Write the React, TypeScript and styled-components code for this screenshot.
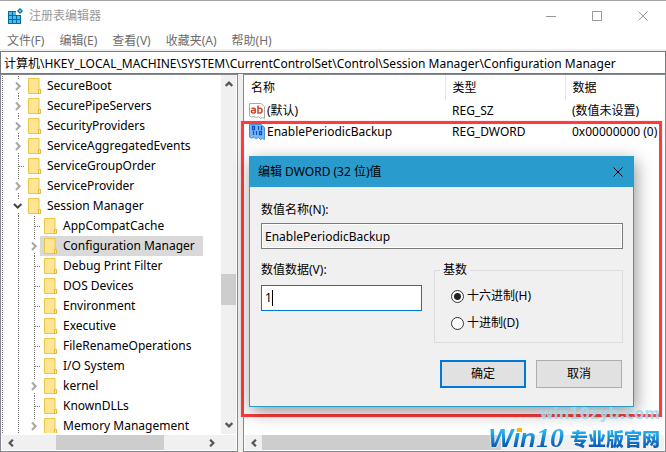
import React, { useState } from "react";
import styled, { createGlobalStyle, css } from "styled-components";

const GlobalStyle = createGlobalStyle`
  *, *::before, *::after { box-sizing: border-box; }
  body { margin: 0; background: #fff; }
  button, input, label, legend, th, td { font: inherit; color: inherit; }
`;

const Window = styled.div`
  position: relative;
  display: flex;
  flex-direction: column;
  min-height: 100vh;
  overflow: hidden;
  border-top: 1px solid #a3a3a3;
  background: #fff;
  color: #000;
  font-family: "Noto Sans", "Noto Sans CJK SC", sans-serif;
  font-size: 12px;
  line-height: 20px;
`;

const TitleBar = styled.header`
  display: flex;
  align-items: center;
  height: 30px;
  padding-left: 7px;
  color: #999;
`;

const WindowTitle = styled.h1`
  flex: 1;
  margin: 0 0 0 6px;
  font-size: 12px;
  font-weight: 400;
`;

const CaptionButton = styled.button`
  display: grid;
  place-items: center;
  width: 46px;
  height: 30px;
  padding: 0;
  border: 0;
  background: none;
  color: #999;
`;

const MenuBar = styled.nav`
  display: flex;
  gap: 15px;
  height: 18px;
  padding-left: 7px;
`;

const MenuButton = styled.button`
  padding: 0;
  border: 0;
  background: none;
  line-height: 20px;
  color: #6d6d6d !important;
`;

const AddressArea = styled.div`
  padding-top: 2px;
  background: #f0f0f0;
`;

const AddressInput = styled.input`
  display: block;
  width: 100%;
  height: 23px;
  padding: 0 3px;
  border: 1px solid #7a7a7a;
  background: #fff;
  outline: 0;
`;

const Panels = styled.main`
  display: flex;
  flex: 1;
  gap: 5px;
  background: #f0f0f0;
`;

const panel = css`
  display: flex;
  flex-direction: column;
  border: 1px solid #828790;
  background: #fff;
`;

const TreePanel = styled.section`
  ${panel}
  width: 238px;
`;

const ListPanel = styled.section`
  ${panel}
  flex: 1;
  min-width: 0;
`;

const TreeBody = styled.div`
  display: flex;
  flex: 1 1 0;
  min-height: 358px;
  padding-right: 1px;
  overflow: hidden;
`;

const TreeList = styled.ul`
  flex: 1 1 0;
  height: 358px;
  margin: 0;
  padding: 1px 0 0;
  overflow: hidden;
  list-style: none;
`;

const TreeRow = styled.li`
  display: flex;
  height: 20px;
  white-space: nowrap;
`;

const Twisty = styled.button`
  display: block;
  padding: 0;
  border: 0;
  background: none;
`;

const Glyph = styled.svg`
  display: block;
  flex: none;
`;

const KeyLabel = styled.span<{ $selected?: boolean }>`
  display: flex;
  align-items: center;
  gap: 5px;
  padding: 0 8px 0 4px;
  background: ${(p) => (p.$selected ? "#d9d9d9" : "transparent")};
`;

const VScroll = styled.div`
  display: flex;
  flex-direction: column;
  align-items: center;
  width: 15px;
  padding: 5px 0;
  background: #f0f0f0;
`;

const VThumb = styled.div`
  width: 15px;
  height: 31px;
  margin: 186px 0 auto;
  background: #cdcdcd;
`;

const HScroll = styled.div<{ $corner?: number }>`
  display: flex;
  align-items: center;
  height: 17px;
  padding-right: ${(p) => p.$corner ?? 0}px;
  border: 1px solid #fff;
  background: #f0f0f0;
`;

const ScrollButton = styled.button`
  display: grid;
  place-items: center;
  width: 17px;
  height: 15px;
  padding: 0;
  border: 0;
  background: none;
`;

const Track = styled.div<{ $start: number; $end: number }>`
  flex: 1;
  height: 15px;
  padding: 0 ${(p) => p.$end}px 0 ${(p) => p.$start}px;
`;

const HThumb = styled.div`
  height: 15px;
  background: #cdcdcd;
`;

const ValueArea = styled.div`
  flex: 1;
`;

const ValueTable = styled.table`
  width: 100%;
  table-layout: fixed;
  border-collapse: collapse;
  text-align: left;
  white-space: nowrap;
`;

const HeadCell = styled.th<{ $width?: string }>`
  width: ${(p) => p.$width ?? "auto"};
  height: 25px;
  padding: 0 0 0 7px;
  border-right: 1px solid #e5e5e5;
  font-weight: 400 !important;
  &:last-child { border-right: 0; }
`;

const Cell = styled.td`
  height: 21px;
  padding: 0 0 0 7px;
  line-height: 20px;
  &:first-child { padding-left: 5px; }
`;

const ValueName = styled.span`
  display: flex;
  align-items: center;
  gap: 2px;
`;

const Highlight = styled.div`
  position: absolute;
  top: 120px;
  right: 4px;
  bottom: 35px;
  left: 241px;
  border: 3px solid #ff3b3b;
  box-shadow: 0 0 1px #ff9c9c;
`;

const Dialog = styled.form`
  position: absolute;
  top: 155px;
  left: 249px;
  width: 385px;
  border: 1px solid #2a9bcd;
  background: #f0f0f0;
  box-shadow: 2px 5px 16px rgba(0, 0, 0, 0.42);
`;

const DialogHeader = styled.header`
  display: flex;
  align-items: center;
  justify-content: space-between;
  height: 30px;
  padding-left: 8px;
  background: #2a9bcd;
`;

const DialogTitle = styled.h2`
  margin: 0;
  font-size: 12px;
  font-weight: 400;
`;

const DialogClose = styled.button`
  display: grid;
  place-items: center;
  width: 30px;
  height: 30px;
  padding: 0;
  border: 0;
  background: none;
`;

const DialogBody = styled.div`
  display: grid;
  gap: 11px;
  padding: 13px 10px 18px 11px;
`;

const Field = styled.div<{ $gap: number }>`
  display: flex;
  flex-direction: column;
  gap: ${(p) => p.$gap}px;
`;

const TextBox = styled.input`
  width: 100%;
  height: 26px;
  padding: 0 3px;
  border: 1px solid #7a7a7a;
  outline: 0;
  background: #f0f0f0;
  box-shadow: inset 0 0 0 1px #fff;
`;

const ValueRow = styled.div`
  display: grid;
  grid-template-columns: 161px 1fr;
  gap: 12px;
`;

const CaretBox = styled.div`
  display: flex;
  align-items: center;
  height: 26px;
  border: 1px solid #0078d7;
  background: #fff;
  padding-left: 3px;
`;

const ValueInput = styled.input`
  width: 7px;
  padding: 0;
  border: 0;
  outline: 0;
  background: none;
`;

const Caret = styled.span`
  width: 1px;
  height: 16px;
  background: #000;
`;

const Group = styled.fieldset`
  display: flex;
  flex-direction: column;
  gap: 7px;
  height: 83px;
  min-width: 0;
  margin: 0;
  padding: 6px 0 0 16px;
  border: 1px solid #dcdcdc;
`;

const GroupLegend = styled.legend`
  margin-left: -11px;
  padding: 0 3px;
`;

const RadioLabel = styled.label`
  display: flex;
  align-items: center;
  gap: 3px;
`;

const Radio = styled.input`
  appearance: none;
  width: 13px;
  height: 13px;
  margin: 0;
  border: 1px solid #333;
  border-radius: 50%;
  background: #fff;
  &:checked { background: radial-gradient(circle, #222 0 3px, #fff 4px); }
`;

const Actions = styled.div`
  display: flex;
  justify-content: flex-end;
  gap: 10px;
  padding: 6px 1px 0 0;
`;

const ActionButton = styled.button<{ $primary?: boolean }>`
  width: 86px;
  height: 28px;
  padding: 0;
  border: ${(p) => (p.$primary ? "2px solid #0078d7" : "1px solid #adadad")};
  background: #e1e1e1;
`;

const Watermark = styled.div`
  position: absolute;
  right: 6px;
  bottom: 0;
  display: flex;
  flex-direction: column;
  align-items: flex-end;
`;

const SiteUrl = styled.span`
  color: rgba(160, 218, 236, 0.9);
  font: 700 15px/20px "DejaVu Sans", sans-serif;
`;

const Brand = styled.div`
  display: flex;
  align-items: center;
  gap: 4px;
  filter: drop-shadow(0 0 1px #fff);
`;

const gradientText = css`
  color: transparent;
  background: linear-gradient(#22b4f0 25%, #0d5fb8 75%);
  background-clip: text;
`;

const BrandLatin = styled.span`
  ${gradientText}
  position: relative;
  padding-right: 2px;
  font: italic 700 26px/28px "Liberation Sans", sans-serif;
`;

const BrandDot = styled.i`
  position: absolute;
  top: 4px;
  left: 28px;
  width: 5px;
  height: 4px;
  background: #ffb400;
`;

const BrandDigits = styled.span`
  font: italic 700 28px/28px "Liberation Serif", serif;
`;

const BrandChinese = styled.span`
  ${gradientText}
  font: 900 18px/28px "Noto Sans CJK SC", sans-serif;
`;

type Direction = "up" | "down" | "left" | "right";
const turns: Record<Direction, number> = { up: 0, right: 90, down: 180, left: 270 };

const Arrow = ({ to }: { to: Direction }) => (
  <Glyph width="8" height="8" viewBox="0 0 8 8">
    <path d="M.7 5.900 4 2.600l3.300 3.300" transform={`rotate(${turns[to]} 4 4)`} fill="none" stroke="#555" strokeWidth="2.200" />
  </Glyph>
);

const Guide = ({ width, x }: { width: number; x: number }) => (
  <Glyph width={width} height="20">
    <path d={`M${x + 0.5} 0v20`} stroke="#777" strokeDasharray="1 1" />
  </Glyph>
);

type Branch = "closed" | "open" | "leaf";

const BranchGlyph = ({ kind }: { kind: Branch }) => (
  <Glyph width="14" height="20" shapeRendering={kind === "leaf" ? "crispEdges" : undefined}>
    {kind === "leaf" ? (
      <path d="M8.500 0v20M9 10.500h5" stroke="#777" strokeDasharray="1 1" fill="none" />
    ) : (
      <>
        <path d="M8.500 0v4M8.500 17v3" stroke="#777" strokeDasharray="1 1" fill="none" />
        {kind === "open" ? (
          <path d="M4 8l3.700 3.700L11.400 8" stroke="#404040" strokeWidth="2" fill="none" />
        ) : (
          <path d="M6 6.500l3.700 3.700L6 14" stroke="#a6a6a6" strokeWidth="2" fill="none" />
        )}
      </>
    )}
  </Glyph>
);

const FolderIcon = () => (
  <Glyph width="14" height="18" viewBox="0 0 14 18">
    <path d="M.5 1.500h10.500v11.500h1.500v3.500H.5z" fill="#ffe594" stroke="#ecc545" />
    <path d="M10.500 16.500v-4h2v4z" fill="#ffe9a5" stroke="#e5b936" />
  </Glyph>
);

const RegeditIcon = () => (
  <Glyph width="16" height="16" viewBox="0 0 16 16">
    <path d="M1 3h8v4h5v9H1z" fill="#0b6a9c" />
    <path d="M2 4h3v3H2zM6 4h3v3H6zM2 8h3v3H2zM6 8h3v3H6zM10 8h3v3h-3zM2 12h3v3H2zM6 12h3v3H6zM10 12h3v3h-3z" fill="#45bdf1" />
    <path d="M13 0l3 3-3 3-3-3z" fill="#0b6a9c" />
    <path d="M13 1.500L14.500 3 13 4.500 11.500 3z" fill="#6bcdf5" />
  </Glyph>
);

const PagePath = "M.5.5H12L15.500 3.500v12l-2-1-2 1-2-2-2 1-3-1-2 .5-2-1z";

const StringIcon = () => (
  <Glyph width="16" height="16" viewBox="0 0 16 16">
    <path d={PagePath} fill="#fff" stroke="#aaa" />
    <g fill="none" stroke="#d6492a" strokeWidth="1.600">
      <path d="M2.500 5.300h2.700q1 0 1 1V10M6.200 7.300H4q-1.700 0-1.700 1.300T4 10h2.200M9 2.500V10h2q2 0 2-2.400T11 5.300H9" />
    </g>
  </Glyph>
);

const BinaryIcon = () => (
  <Glyph width="16" height="16" viewBox="0 0 16 16">
    <path d={PagePath} fill="#79b9f2" stroke="#4c8fce" />
    <path d="M3.500 2.500h2v3h-2zM9.500 2v4M12.500 2v4M4.500 7v4M7.500 7v4M10.500 7.500h2v3h-2z" fill="none" stroke="#0b50cf" strokeWidth="1.300" />
  </Glyph>
);

const CloseIcon = ({ size }: { size: number }) => (
  <Glyph width={size} height={size} viewBox="0 0 10 10">
    <path d="M.5.5l9 9M9.500.5l-9 9" stroke="currentColor" fill="none" />
  </Glyph>
);

interface Key {
  name: string;
  level: 1 | 2;
  branch: Branch;
}

const keys: Key[] = [
  { name: "SecureBoot", level: 1, branch: "closed" },
  { name: "SecurePipeServers", level: 1, branch: "closed" },
  { name: "SecurityProviders", level: 1, branch: "closed" },
  { name: "ServiceAggregatedEvents", level: 1, branch: "closed" },
  { name: "ServiceGroupOrder", level: 1, branch: "leaf" },
  { name: "ServiceProvider", level: 1, branch: "closed" },
  { name: "Session Manager", level: 1, branch: "open" },
  { name: "AppCompatCache", level: 2, branch: "leaf" },
  { name: "Configuration Manager", level: 2, branch: "closed" },
  { name: "Debug Print Filter", level: 2, branch: "leaf" },
  { name: "DOS Devices", level: 2, branch: "leaf" },
  { name: "Environment", level: 2, branch: "leaf" },
  { name: "Executive", level: 2, branch: "leaf" },
  { name: "FileRenameOperations", level: 2, branch: "leaf" },
  { name: "I/O System", level: 2, branch: "leaf" },
  { name: "kernel", level: 2, branch: "closed" },
  { name: "KnownDLLs", level: 2, branch: "leaf" },
  { name: "Memory Management", level: 2, branch: "closed" },
];

const menus = ["文件(F)", "编辑(E)", "查看(V)", "收藏夹(A)", "帮助(H)"];

const bases = [
  { id: "hex", label: "十六进制(H)" },
  { id: "dec", label: "十进制(D)" },
];

export default function App() {
  const [base, setBase] = useState("hex");
  const [value, setValue] = useState("1");

  return (
    <Window>
      <GlobalStyle />
      <TitleBar>
        <RegeditIcon />
        <WindowTitle>注册表编辑器</WindowTitle>
        <CaptionButton aria-label="最小化">
          <Glyph width="10" height="10"><path d="M0 5.500h10" stroke="currentColor" /></Glyph>
        </CaptionButton>
        <CaptionButton aria-label="最大化">
          <Glyph width="10" height="10"><path d="M.5.5h9v9h-9z" stroke="currentColor" fill="none" /></Glyph>
        </CaptionButton>
        <CaptionButton aria-label="关闭"><CloseIcon size={10} /></CaptionButton>
      </TitleBar>
      <MenuBar>
        {menus.map((m) => <MenuButton key={m}>{m}</MenuButton>)}
      </MenuBar>
      <AddressArea>
        <AddressInput
          aria-label="地址"
          defaultValue={"计算机\\HKEY_LOCAL_MACHINE\\SYSTEM\\CurrentControlSet\\Control\\Session Manager\\Configuration Manager"}
        />
      </AddressArea>
      <Panels>
        <TreePanel>
          <TreeBody>
            <TreeList>
              {keys.map((k) => (
                <TreeRow key={k.name}>
                  <Guide width={9} x={1} />
                  {k.level === 2 && <Guide width={16} x={8} />}
                  {k.branch === "leaf" ? (
                    <BranchGlyph kind="leaf" />
                  ) : (
                    <Twisty aria-label={k.name}><BranchGlyph kind={k.branch} /></Twisty>
                  )}
                  <KeyLabel $selected={k.name === "Configuration Manager"}>
                    <FolderIcon />
                    {k.name}
                  </KeyLabel>
                </TreeRow>
              ))}
            </TreeList>
            <VScroll>
              <Arrow to="up" />
              <VThumb />
              <Arrow to="down" />
            </VScroll>
          </TreeBody>
          <HScroll $corner={16}>
            <ScrollButton aria-label="向左滚动"><Arrow to="left" /></ScrollButton>
            <Track $start={37} $end={39}><HThumb /></Track>
            <ScrollButton aria-label="向右滚动"><Arrow to="right" /></ScrollButton>
          </HScroll>
        </TreePanel>
        <ListPanel>
          <ValueArea>
            <ValueTable>
              <thead>
                <tr>
                  <HeadCell $width="201px">名称</HeadCell>
                  <HeadCell $width="120px">类型</HeadCell>
                  <HeadCell>数据</HeadCell>
                </tr>
              </thead>
              <tbody>
                <tr>
                  <Cell><ValueName><StringIcon />(默认)</ValueName></Cell>
                  <Cell>REG_SZ</Cell>
                  <Cell>(数值未设置)</Cell>
                </tr>
                <tr>
                  <Cell><ValueName><BinaryIcon />EnablePeriodicBackup</ValueName></Cell>
                  <Cell>REG_DWORD</Cell>
                  <Cell>0x00000000 (0)</Cell>
                </tr>
              </tbody>
            </ValueTable>
          </ValueArea>
          <HScroll>
            <ScrollButton aria-label="向左滚动"><Arrow to="left" /></ScrollButton>
            <Track $start={0} $end={146}><HThumb /></Track>
            <ScrollButton aria-label="向右滚动"><Arrow to="right" /></ScrollButton>
          </HScroll>
        </ListPanel>
      </Panels>
      <Highlight />
      <Dialog onSubmit={(e) => e.preventDefault()}>
        <DialogHeader>
          <DialogTitle>编辑 DWORD (32 位)值</DialogTitle>
          <DialogClose type="button" aria-label="关闭"><CloseIcon size={10} /></DialogClose>
        </DialogHeader>
        <DialogBody>
          <Field $gap={3}>
            <label htmlFor="value-name">数值名称(N):</label>
            <TextBox id="value-name" readOnly value="EnablePeriodicBackup" />
          </Field>
          <ValueRow>
            <Field $gap={5}>
              <label htmlFor="value-data">数值数据(V):</label>
              <CaretBox>
                <ValueInput id="value-data" value={value} onChange={(e) => setValue(e.target.value)} />
                <Caret />
              </CaretBox>
            </Field>
            <Group>
              <GroupLegend>基数</GroupLegend>
              {bases.map((b) => (
                <RadioLabel key={b.id}>
                  <Radio type="radio" name="base" checked={base === b.id} onChange={() => setBase(b.id)} />
                  {b.label}
                </RadioLabel>
              ))}
            </Group>
          </ValueRow>
          <Actions>
            <ActionButton $primary>确定</ActionButton>
            <ActionButton type="button">取消</ActionButton>
          </Actions>
        </DialogBody>
      </Dialog>
      <Watermark>
        <SiteUrl>win10zyb.com</SiteUrl>
        <Brand>
          <BrandLatin>Win<BrandDigits>10</BrandDigits><BrandDot /></BrandLatin>
          <BrandChinese>专业版官网</BrandChinese>
        </Brand>
      </Watermark>
    </Window>
  );
}
